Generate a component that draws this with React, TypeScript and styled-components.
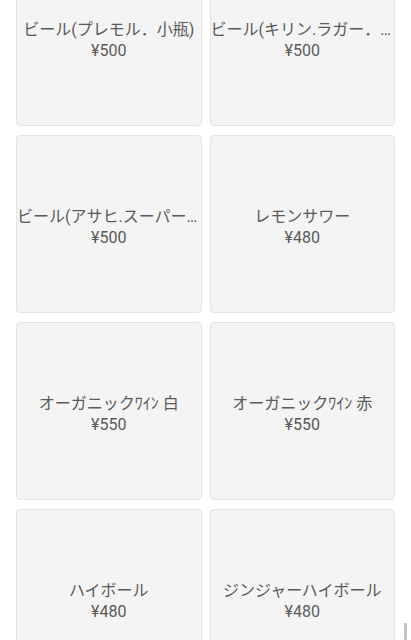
import React, { useLayoutEffect, useRef } from "react";
import styled, { createGlobalStyle } from "styled-components";

const GlobalStyle = createGlobalStyle`
  html, body { margin: 0; padding: 0; background: #ffffff; }
  body { font-family: Roboto, "Noto Sans CJK JP", sans-serif; }
`;

const Viewport = styled.div`
  height: 100vh;
  overflow-y: auto;
  scrollbar-width: none;
  &::-webkit-scrollbar { display: none; }
`;

const Grid = styled.div`
  display: grid;
  grid-template-columns: 1fr 1fr;
  column-gap: 8px;
  row-gap: 9px;
  padding: 16px 16px 24px;
`;

const Card = styled.div`
  height: 178px;
  box-sizing: border-box;
  background: #f4f4f4;
  border: 1px solid #e4e4e4;
  border-radius: 4px;
  display: flex;
  flex-direction: column;
  align-items: center;
  justify-content: center;
  padding: 5px 0 0;
  min-width: 0;
  color: #5a5a5a;
  font-size: 16px;
  line-height: 21px;
`;

const Name = styled.div`
  max-width: 100%;
  white-space: nowrap;
  overflow: hidden;
  text-overflow: ellipsis;
  font-family: Roboto, "Noto Sans CJK JP", sans-serif;
`;

const Price = styled.div`
  font-family: Roboto, "Noto Sans CJK JP", sans-serif;
`;

const ScrollThumb = styled.div`
  position: fixed;
  right: 4px;
  bottom: 0;
  width: 3px;
  height: 17px;
  background: #c4c4c4;
  border-radius: 1px;
`;

const items = [
  { name: "ビール(プレモル．小瓶)", price: "¥500" },
  { name: "ビール(キリン.ラガー．中瓶)", price: "¥500" },
  { name: "ビール(アサヒ.スーパードライ．中瓶)", price: "¥500" },
  { name: "レモンサワー", price: "¥480" },
  { name: "オーガニックﾜｲﾝ 白", price: "¥550" },
  { name: "オーガニックﾜｲﾝ 赤", price: "¥550" },
  { name: "ハイボール", price: "¥480" },
  { name: "ジンジャーハイボール", price: "¥480" },
];

export default function App() {
  const ref = useRef<HTMLDivElement>(null);
  useLayoutEffect(() => {
    if (ref.current) ref.current.scrollTop = 68;
  }, []);
  return (
    <>
      <GlobalStyle />
      <Viewport ref={ref}>
        <Grid>
          {items.map((it) => (
            <Card key={it.name}>
              <Name>{it.name}</Name>
              <Price>{it.price}</Price>
            </Card>
          ))}
        </Grid>
      </Viewport>
      <ScrollThumb />
    </>
  );
}
